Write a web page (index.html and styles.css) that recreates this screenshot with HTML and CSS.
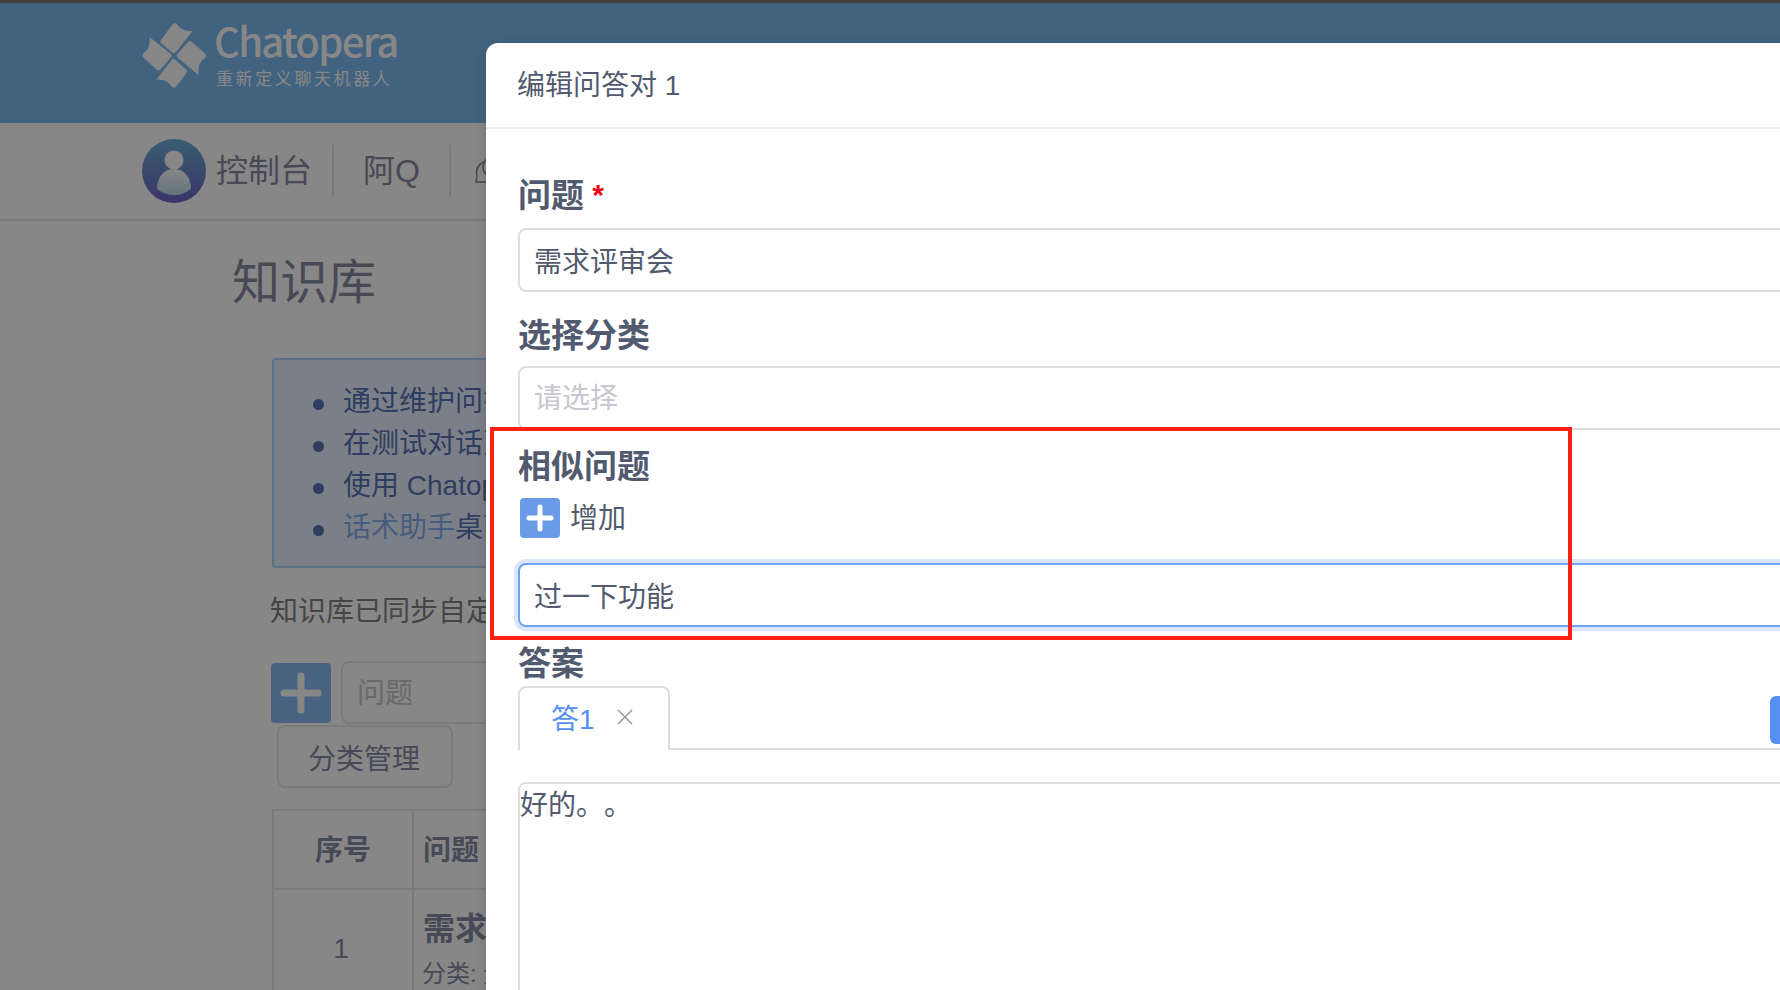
FILE: index.html
```html
<!DOCTYPE html>
<html lang="zh-CN">
<head>
<meta charset="utf-8">
<title>知识库</title>
<link rel="stylesheet" href="styles.css">
</head>
<body>
<div class="page">
  <div class="topbar"></div>
  <header class="brand">
    <svg class="logo" viewBox="0 0 85 80" aria-hidden="true">
      <path class="petal" d="M38.5 38.5 L26 28 Q24.500 26.500 26 25 L37 10 Q39.500 7 42 9.500 Q47 17 57.500 16 L41 37 Z"/>
      <path class="petal" d="M41.500 40 L53 27 Q55 25.500 57 27 L70 38.500 Q72 41 70 43 Q62 48 63.500 60 L42.500 42.500 Z"/>
      <path class="petal" d="M38 43 L50.500 54 Q53 56 51.500 58 L41 71.500 Q39 74 36.500 71.500 Q32 64 21.500 64.500 L38 43.500 Z"/>
      <path class="petal" d="M36.500 41.500 L25.500 54.500 Q23.500 56 21.500 54.500 L8.500 42.500 Q6.500 40 8.500 38 Q16 33 14.500 22 L36.500 39.500 Z"/>
    </svg>
    <div class="brand-text">
      <div class="brand-name">Chatopera</div>
      <div class="brand-tag">重新定义聊天机器人</div>
    </div>
  </header>
  <nav class="nav">
    <svg class="avatar" viewBox="0 0 64 64" aria-hidden="true">
      <defs>
        <linearGradient id="avatarBg" x1="0" y1="0" x2="0" y2="1">
          <stop offset="0" stop-color="#3c97c8"/>
          <stop offset="1" stop-color="#4133b5"/>
        </linearGradient>
        <linearGradient id="avatarBody" x1="0" y1="0" x2="0" y2="1">
          <stop offset="0" stop-color="#ffffff"/>
          <stop offset="1" stop-color="#a6d0ea"/>
        </linearGradient>
      </defs>
      <circle cx="32" cy="32" r="32" fill="url(#avatarBg)"/>
      <circle cx="32" cy="21" r="9.500" fill="#fff"/>
      <path d="M32 30 C43 30 49 39 49 50 Q41 56 32 56 Q23 56 15 50 C15 39 21 30 32 30 Z" fill="url(#avatarBody)"/>
    </svg>
    <a class="nav-item nav-first">控制台</a>
    <a class="nav-item">阿Q</a>
    <svg class="chat-icon" viewBox="0 0 34 34" aria-hidden="true">
      <circle cx="20" cy="13" r="11"/>
      <path d="M9 8 Q1 13 3 22 L2 28 L18 28"/>
    </svg>
  </nav>
  <main class="main">
    <h1 class="title">知识库</h1>
    <div class="alert">
      <ul class="alert-list">
        <li>通过维护问答对</li>
        <li>在测试对话页</li>
        <li>使用 Chatopera</li>
        <li><a class="alert-link">话术助手</a>桌面</li>
      </ul>
    </div>
    <p class="sync">知识库已同步自定义</p>
    <div class="toolbar">
      <button class="add-big" aria-label="增加">
        <svg viewBox="0 0 60 60" aria-hidden="true"><path d="M30 13 V47 M13 30 H47"/></svg>
      </button>
      <input class="search" placeholder="问题">
    </div>
    <button class="cat-btn">分类管理</button>
    <table class="table">
      <thead>
        <tr><th class="col-no">序号</th><th class="col-q">问题</th></tr>
      </thead>
      <tbody>
        <tr>
          <td class="cell-no">1</td>
          <td class="cell-q"><div class="q-name">需求评审会</div><div class="q-cat">分类: 无</div></td>
        </tr>
      </tbody>
    </table>
  </main>
</div>

<div class="mask">
  <section class="modal">
    <div class="modal-head">编辑问答对 1</div>
    <div class="modal-body">
      <label class="label label-first">问题 <span class="req">*</span></label>
      <input class="field" value="需求评审会">
      <label class="label label-second">选择分类</label>
      <input class="field field-select" placeholder="请选择">
      <label class="label label-third">相似问题</label>
      <div class="add-row">
        <button class="add-small" aria-label="增加">
          <svg viewBox="0 0 40 40" aria-hidden="true"><path d="M20 9 V31 M9 20 H31"/></svg>
        </button>
        <span class="add-text">增加</span>
      </div>
      <input class="field field-focus" value="过一下功能">
      <label class="label label-fourth">答案</label>
      <div class="tabs">
        <div class="tab">
          <span class="tab-name">答1</span>
          <svg class="tab-close" viewBox="0 0 16 16" aria-hidden="true"><path d="M1 1 L15 15 M15 1 L1 15"/></svg>
        </div>
        <button class="tab-add" aria-label="增加"></button>
      </div>
      <textarea class="answer">好的。。</textarea>
    </div>
  </section>
</div>
<div class="callout"></div>
</body>
</html>
```
FILE: styles.css
```css
* { box-sizing: border-box; }
html, body { margin: 0; height: 100%; overflow: hidden; }
body {
  position: relative;
  background: #fff;
  color: #5c6685;
  font-family: "Liberation Sans", "Noto Sans CJK SC", sans-serif;
  font-size: 28px;
  text-spacing-trim: space-all;
}
input, textarea, button { font: inherit; color: inherit; margin: 0; }

.page { height: 990px; overflow: hidden; }
.topbar { height: 3px; background: #4b4b4b; }

.brand {
  height: 120px;
  background: #50a5eb;
  display: flex;
  align-items: flex-start;
  padding-left: 135px;
}
.logo { width: 85px; height: 80px; margin-top: 12px; flex: none; }
.petal { fill: #fff; }
.brand-text { margin: 0 0 0 -6px; color: #fff; }
.brand-name {
  font-family: "Noto Sans CJK SC", sans-serif;
  font-size: 40px;
  font-weight: 500;
  letter-spacing: -1.700px;
  line-height: 44px;
  margin-top: 15px;
}
.brand-tag { font-size: 17px; letter-spacing: 2.600px; line-height: 20px; margin: 8px 0 0 2px; }

.nav {
  height: 98px;
  border-bottom: 2px solid #d9d9d9;
  display: flex;
  align-items: center;
  padding-left: 142px;
  white-space: nowrap;
}
.avatar { width: 64px; height: 64px; margin-right: 10px; }
.nav-item {
  font-size: 32px;
  line-height: 52px;
  padding: 0 29px;
  border-right: 2px solid #dedede;
  color: #5f6682;
}
.nav-first { padding: 0 20px 0 0; }
.chat-icon { width: 34px; height: 34px; margin-left: 23px; fill: none; stroke: #5f6682; stroke-width: 1.500; }

.main { padding-left: 271px; }
.title {
  margin: 32px 0 45px -39px;
  font-size: 48px;
  line-height: 60px;
  font-weight: 400;
  color: #5f6682;
  white-space: nowrap;
}
.alert {
  margin-left: 1px;
  width: 1400px;
  height: 210px;
  padding: 21px 0 0 39px;
  background: #e1ebff;
  border: 2px solid #91c5ff;
  border-radius: 4px;
  color: #23469d;
}
.alert-list { margin: 0; padding: 0; list-style: none; }
.alert-list li { display: flex; align-items: center; line-height: 42px; white-space: nowrap; }
.alert-list li::before {
  content: "";
  width: 11px;
  height: 11px;
  margin: 4px 19px 0 0;
  border-radius: 50%;
  background: #23469d;
  flex: none;
}
.alert-link { color: #5c95ec; }
.sync { margin: 23px 0 28px -1px; line-height: 42px; color: #5a5a5a; }
.toolbar { display: flex; align-items: center; height: 63px; }
.add-big {
  width: 60px;
  height: 60px;
  padding: 0;
  margin-top: 1px;
  border: 0;
  border-radius: 4px;
  background: #66a2f2;
  display: block;
}
.add-big svg, .add-small svg { display: block; width: 100%; height: 100%; fill: none; stroke: #fff; stroke-linecap: round; }
.add-big svg { stroke-width: 7; }
.search {
  width: 400px;
  height: 63px;
  margin-left: 10px;
  padding: 2px 14px 0;
  background: #fff;
  border: 2px solid #dcdee2;
  border-radius: 8px;
}
.search::placeholder { color: #b4b4b4; opacity: 1; }
.cat-btn {
  display: block;
  width: 176px;
  height: 63px;
  margin: 1px 0 21px 6px;
  padding: 0 2px 0 0;
  background: #fff;
  border: 2px solid #dcdee2;
  border-radius: 8px;
  color: #5c6685;
}
.table { margin-left: 1px; width: 1400px; border-collapse: collapse; table-layout: fixed; border: 2px solid #dcdee2; }
.table th, .table td { border: 2px solid #dcdee2; }
.table th { height: 79px; font-weight: 700; padding: 0 0 4px; }
.col-no { width: 140px; }
.table .col-q { text-align: left; padding-left: 9px; }
.cell-no { text-align: center; padding: 0 4px 0 0; }
.cell-q { height: 120px; padding: 0 0 0 9px; }
.q-name { font-size: 32px; font-weight: 700; line-height: 44px; }
.q-cat { font-size: 24px; line-height: 36px; margin: 5px 0 0 -1px; }

.mask {
  position: absolute;
  inset: 0;
  background: rgba(55, 55, 55, 0.6);
  overflow: hidden;
}
.modal {
  width: 1400px;
  height: 1200px;
  margin: 43px 0 0 486px;
  background: #fff;
  border-radius: 12px 0 0 0;
  box-shadow: 0 4px 12px rgba(0, 0, 0, 0.15);
  color: #515a6e;
}
.modal-head {
  height: 86px;
  padding-left: 31px;
  border-bottom: 2px solid #e8eaec;
  font-size: 28px;
  line-height: 86px;
}
.modal-body { padding: 48px 32px 0; }
.label { display: block; font-size: 33px; font-weight: 700; line-height: 38px; }
.label-first { margin-bottom: 13px; }
.label-second { margin: 25px 0 11px; }
.label-third { margin: 18px 0 12px; }
.label-fourth { margin: 18px 0 3px; }
.req { color: #ed0014; font-size: 30px; font-weight: 700; line-height: 1; vertical-align: 2px; margin-left: -1px; }
.field {
  display: block;
  width: 100%;
  height: 64px;
  padding: 0 14px;
  border: 2px solid #dcdee2;
  border-radius: 8px;
  background: #fff;
  outline: none;
}
.field-select { padding-top: 2px; }
.field::placeholder { color: #c5c8ce; opacity: 1; }
.field-focus { border-color: #6ea3f0; box-shadow: 0 0 0 4px #dbe6fb; }
.add-row { display: flex; align-items: center; height: 40px; margin: 0 0 25px 2px; }
.add-small { width: 40px; height: 40px; padding: 0; border: 0; border-radius: 4px; background: #6a9be8; }
.add-small svg { stroke-width: 5; }
.add-text { margin: -5px 0 0 10px; }
.tabs {
  display: flex;
  height: 64px;
  border-bottom: 2px solid #dcdee2;
  margin-bottom: 32px;
}
.tab {
  width: 152px;
  height: 64px;
  padding: 0 0 4px 31px;
  display: flex;
  align-items: center;
  border: 2px solid #dcdee2;
  border-bottom: 0;
  border-radius: 8px 8px 0 0;
  background: #fff;
  color: #5590f0;
}
.tab-close { width: 16px; height: 16px; margin-left: 22px; fill: none; stroke: #999; stroke-width: 1.500; }
.tab-add {
  width: 84px;
  height: 48px;
  margin: 10px 0 0 auto;
  padding: 0;
  border: 0;
  border-radius: 6px;
  background: #5590f0;
}
.answer {
  display: block;
  width: 100%;
  height: 320px;
  padding: 2px 0 0;
  border: 2px solid #dcdee2;
  border-radius: 8px;
  background: #fff;
  outline: none;
  resize: none;
  line-height: 40px;
}

.callout {
  position: absolute;
  left: 490px;
  top: 427px;
  width: 1082px;
  height: 213px;
  border: 4px solid #ff2012;
}
```
